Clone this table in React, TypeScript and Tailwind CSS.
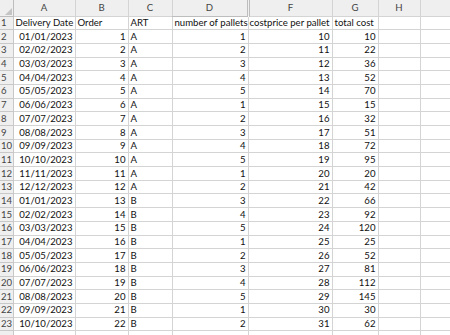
import React from 'react';

const COLS = [
  { key: 'A', w: 62 },
  { key: 'B', w: 53 },
  { key: 'C', w: 44 },
  { key: 'D', w: 76 },
  { key: 'F', w: 84 },
  { key: 'G', w: 46 },
  { key: 'H', w: 42 },
  { key: '', w: 40 },
];

const DATES = ['01/01', '02/02', '03/03', '04/04', '05/05', '06/06', '07/07', '08/08', '09/09', '10/10', '11/11', '12/12'];

const rows = Array.from({ length: 22 }, (_, i) => {
  const pallets = (i % 5) + 1;
  const price = 10 + i;
  return {
    date: `${DATES[i % 12]}/2023`,
    order: i + 1,
    art: i < 12 ? 'A' : 'B',
    pallets,
    price,
    total: pallets * price,
  };
});

const cell = 'border-r border-b border-[#d4d4d4] px-[2px] whitespace-nowrap overflow-hidden';

export default function App() {
  return (
    <div className="w-[450px] h-[335px] overflow-hidden bg-white text-[9.6px] text-[#111] leading-none" style={{ fontFamily: 'Lato, "Open Sans", sans-serif' }}>
      <table className="border-collapse table-fixed w-[460px]">
        <colgroup>
          <col style={{ width: 13 }} />
          {COLS.map((c, i) => <col key={i} style={{ width: c.w }} />)}
        </colgroup>
        <thead>
          <tr className="h-[16px] bg-[#efefef] text-[#444]">
            <th className="relative border-r border-b border-[#bdbdbd] p-0">
              <span className="absolute right-[1px] bottom-[1px] w-0 h-0 border-l-[7px] border-l-transparent border-b-[7px] border-b-[#c4c4c4]" />
            </th>
            {COLS.map((c, i) => (
              <th key={i} className={`font-normal text-center border-b border-[#bdbdbd] p-0 ${c.key === 'D' ? 'border-r-[3px] border-double border-r-[#bdbdbd]' : 'border-r border-[#d4d4d4]'}`}>{c.key}</th>
            ))}
          </tr>
        </thead>
        <tbody>
          <tr className="h-[13.7px]">
            <td className="bg-[#efefef] text-[#444] border-r border-b border-[#c8c8c8] pl-[1px] overflow-hidden">1</td>
            <td className={cell}>Delivery Date</td>
            <td className={cell}>Order</td>
            <td className={cell}>ART</td>
            <td className={cell}>number of pallets</td>
            <td className={`${cell} pl-[1px]`}>costprice per pallet</td>
            <td className={cell}>total cost</td>
            <td className={cell}></td>
            <td className={cell}></td>
          </tr>
          {rows.map((r, i) => (
            <tr key={i} className="h-[13.7px]">
              <td className="bg-[#efefef] text-[#444] border-r border-b border-[#c8c8c8] pl-[1px] overflow-hidden whitespace-nowrap">{i + 2}</td>
              <td className={`${cell} text-right`}>{r.date}</td>
              <td className={`${cell} text-right`}>{r.order}</td>
              <td className={cell}>{r.art}</td>
              <td className={`${cell} text-right`}>{r.pallets}</td>
              <td className={`${cell} text-right`}>{r.price}</td>
              <td className={`${cell} text-right`}>{r.total}</td>
              <td className={cell}></td>
              <td className={cell}></td>
            </tr>
          ))}
          <tr className="h-[13.7px]">
            <td className="bg-[#efefef] border-r border-b border-[#c8c8c8]"></td>
            {COLS.map((_, j) => <td key={j} className={cell}></td>)}
          </tr>
        </tbody>
      </table>
    </div>
  );
}
